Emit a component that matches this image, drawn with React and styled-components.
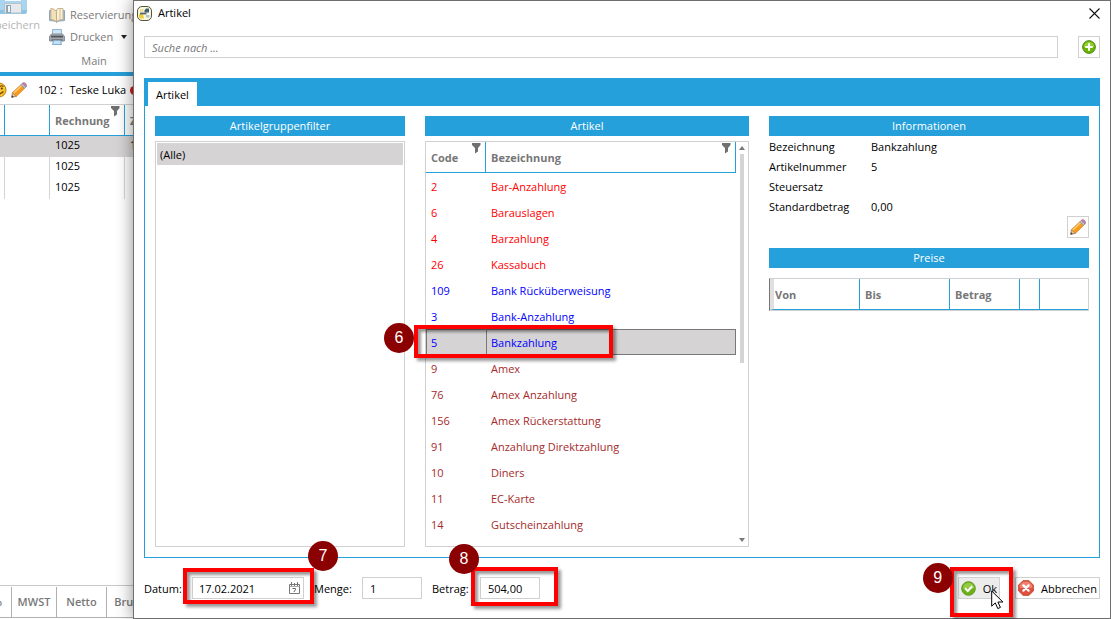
import { useState } from "react";
import styled, { createGlobalStyle } from "styled-components";

const GlobalStyle = createGlobalStyle`
  * {
    box-sizing: border-box;
  }
  body {
    margin: 0;
    background: #fff;
    color: #000;
    font-family: "Open Sans", "Noto Sans", sans-serif;
    font-size: 11px;
    line-height: 16px;
  }
  button, input {
    font: inherit;
    color: inherit;
    margin: 0;
  }
`;

/* main window */
const Page = styled.div`
  position: relative;
  height: 100vh;
  overflow: hidden;
`;
const MainWindow = styled.div`
  display: flex;
  flex-direction: column;
  height: 100%;
  white-space: nowrap;
`;
const Ribbon = styled.div`
  display: flex;
  gap: 9px;
  height: 76px;
  border-bottom: 4px solid #26a0da;
  color: #7a7a7a;
  overflow: hidden;
`;
const SaveButton = styled.button`
  display: flex;
  flex-direction: column;
  align-items: flex-end;
  width: 40px;
  padding: 0;
  border: none;
  background: none;
  color: #b5b5b5;
  svg {
    flex: none;
    margin: 0 12px 2px 0;
  }
`;
const RibbonGroup = styled.div`
  display: flex;
  flex-direction: column;
  padding-top: 4px;
`;
const RibbonButton = styled.button`
  display: flex;
  align-items: center;
  gap: 5px;
  height: 22px;
  padding: 0;
  border: none;
  background: none;
`;
const RibbonTitle = styled.div`
  width: 90px;
  padding-top: 5px;
  text-align: center;
`;
const Caret = styled.span`
  border: 3px solid transparent;
  border-top: 4px solid #222;
  border-bottom: none;
  margin-left: 3px;
`;
const GuestBar = styled.div`
  display: flex;
  align-items: center;
  gap: 4px;
  height: 28px;
  svg {
    flex: none;
  }
`;
const GuestName = styled.span`
  margin-left: 7px;
`;
const RedDot = styled.span`
  width: 9px;
  height: 9px;
  border-radius: 50%;
  background: #d01818;
`;
const BillTable = styled.table`
  width: 100%;
  table-layout: fixed;
  border-spacing: 0;
  border-top: 1px solid #d0d0d0;
`;
const BillHead = styled.th`
  position: relative;
  width: ${(props) => props.$width || "auto"};
  height: 31px;
  padding: 2px 0 0;
  border-right: 1px solid #26a0da;
  border-bottom: 1px solid #26a0da;
  color: #777;
  font-weight: 700;
  text-align: left;
  text-indent: 5px;
`;
const BillCell = styled.td`
  height: 21px;
  padding: 0 0 4px;
  border-right: 1px solid #d5d3d4;
  background: ${(props) => (props.$active ? "#d5d3d4" : "#fff")};
  text-indent: 5px;
`;
const SumBar = styled.div`
  display: flex;
  margin-top: auto;
  padding: 1px 0;
  border-top: 1px solid #c8c8c8;
`;
const SumCell = styled.div`
  display: flex;
  align-items: center;
  justify-content: ${(props) => (props.$cut ? "flex-end" : "center")};
  width: ${(props) => props.$width};
  height: 31px;
  padding-right: ${(props) => (props.$cut ? "9px" : "0")};
  border-right: 1px solid #b0b0b0;
  border-bottom: 1px solid #b0b0b0;
  overflow: hidden;
  color: #777;
  font-weight: 600;
`;

/* dialog */
const Dialog = styled.section`
  position: absolute;
  inset: 0 0 0 133px;
  display: flex;
  flex-direction: column;
  border: 1px solid #6f6f6f;
  background: #fff;
  box-shadow: 0 0 16px rgba(0, 0, 0, 0.45);
`;
const TitleBar = styled.header`
  display: flex;
  align-items: center;
  gap: 6px;
  height: 24px;
  padding: 0 10px 0 3px;
`;
const Title = styled.h1`
  flex: 1;
  margin: 0;
  font-size: 11px;
  font-weight: 400;
`;
const CloseButton = styled.button`
  display: flex;
  padding: 0;
  border: none;
  background: none;
`;
const SearchRow = styled.div`
  display: flex;
  gap: 20px;
  padding: 11px 10px 20px;
`;
const TextInput = styled.input`
  width: ${(props) => props.$width || "auto"};
  height: 22px;
  padding: 1px 7px 0;
  border: 1px solid #d0d0d0;
  background: #fff;
  outline: none;
  &::placeholder {
    color: #777;
    font-style: italic;
    opacity: 1;
  }
`;
const SearchInput = styled(TextInput)`
  flex: 1;
`;
const IconButton = styled.button`
  display: flex;
  align-items: center;
  justify-content: center;
  width: 22px;
  height: 22px;
  padding: 0;
  border: 1px solid #d0d0d0;
  background: #fff;
`;
const TabStrip = styled.div`
  display: flex;
  margin: 0 10px;
  padding: 4px 4px 0;
  background: #26a0da;
`;
const Tab = styled.button`
  height: 24px;
  padding: 2px 8px 0;
  border: none;
  background: #fff;
`;
const TabBody = styled.div`
  flex: 1;
  display: grid;
  grid-template-columns: 250px 1fr 320px;
  gap: 20px;
  min-height: 0;
  margin: 0 10px;
  padding: 10px;
  border: 1px solid #26a0da;
  border-top: none;
`;
const Column = styled.div`
  display: flex;
  flex-direction: column;
  min-width: 0;
`;
const PanelTitle = styled.h2`
  margin: 0;
  padding: 2px 0;
  background: #26a0da;
  color: #fff;
  font-size: 11px;
  font-weight: 400;
  text-align: center;
`;
const GroupList = styled.ul`
  flex: 1;
  margin: 5px 0 0;
  padding: 1px;
  border: 1px solid #d0d0d0;
  list-style: none;
`;
const GroupItem = styled.li`
  padding: 4px 3px 2px;
  background: #d5d3d4;
`;
const TableFrame = styled.div`
  flex: 1;
  display: flex;
  align-items: stretch;
  margin-top: 5px;
  border: 1px solid #d0d0d0;
`;
const TableArea = styled.div`
  flex: 1;
`;
const ArticleTable = styled.table`
  width: 100%;
  table-layout: fixed;
  border-spacing: 0;
`;
const ArticleHead = styled.th`
  position: relative;
  width: ${(props) => props.$width || "auto"};
  height: 31px;
  padding: 2px 5px 0;
  border-right: 1px solid #26a0da;
  border-bottom: 1px solid #26a0da;
  color: #777;
  font-weight: 700;
  text-align: left;
`;
const Funnel = styled.svg`
  position: absolute;
  top: 1px;
  right: 4px;
`;
const ArticleCell = styled.td`
  position: relative;
  height: 26px;
  padding: 2px 4px 0;
  border: 1px solid transparent;
  color: ${(props) => props.color};
`;
const ArticleRow = styled.tr`
  ${(props) =>
    props.$selected &&
    `
    background: #d5d3d4;
    ${ArticleCell} { border-color: #777; }
    ${ArticleCell}:first-child { border-right-color: transparent; }
  `}
`;
const ScrollBar = styled.div`
  display: flex;
  flex-direction: column;
  align-items: center;
  width: 12px;
  padding: 4px 0;
`;
const ScrollArrow = styled.span`
  border: 3px solid transparent;
  ${(props) => (props.$up ? "border-bottom: 4px solid #777; border-top: none;" : "border-top: 4px solid #777; border-bottom: none;")}
`;
const ScrollTrack = styled.div`
  flex: 1;
  width: 4px;
  margin: 4px 0;
`;
const ScrollThumb = styled.div`
  height: 55%;
  background: #d5d3d4;
`;
const InfoList = styled.dl`
  display: grid;
  grid-template-columns: 102px 1fr;
  margin: 1px 0 0;
`;
const InfoCell = styled.div`
  display: contents;
  dt, dd {
    height: 20px;
    margin: 0;
    padding: 2px 0;
  }
`;
const EditRow = styled.div`
  display: flex;
  justify-content: flex-end;
  margin: -1px 0 10px;
`;
const PriceTable = styled.table`
  width: 100%;
  margin-top: 10px;
  table-layout: fixed;
  border-spacing: 0;
  border: 1px solid #d0d0d0;
  border-left-color: #777;
`;
const PriceHead = styled.th`
  width: ${(props) => props.$width || "auto"};
  height: 31px;
  padding: 2px 5px 0;
  border-right: 1px solid #26a0da;
  border-bottom: 1px solid #26a0da;
  color: #777;
  font-weight: 700;
  text-align: left;
  &:first-child {
    border-left: 4px solid #e0e0e0;
    padding-left: 1px;
  }
  &:last-child {
    border-right: none;
  }
`;
const Footer = styled.footer`
  display: flex;
  align-items: center;
  gap: 10px;
  padding: 19px 10px;
`;
const Field = styled.div`
  display: flex;
  align-items: center;
`;
const FieldLabel = styled.label`
  min-width: 48px;
  padding-top: 1px;
`;
const Anchor = styled.div`
  position: relative;
`;
const DateBox = styled.div`
  display: flex;
  align-items: center;
  width: 112px;
  height: 22px;
  border: 1px solid #d0d0d0;
  padding-right: 3px;
`;
const DateInput = styled.input`
  flex: 1;
  min-width: 0;
  padding: 1px 6px 0;
  border: none;
  background: none;
  outline: none;
`;
const PlainButton = styled.button`
  display: flex;
  padding: 0;
  border: none;
  background: none;
`;
const Actions = styled.div`
  display: flex;
  gap: 15px;
  margin-left: auto;
`;
const ActionButton = styled.button`
  display: flex;
  align-items: center;
  gap: 7px;
  height: 22px;
  padding: 0 2px;
  border: 1px solid #d0d0d0;
  background: ${(props) => (props.$hover ? "#ececec" : "#fff")};
  span {
    padding-top: 1px;
  }
`;

/* numbered step marks */
const Mark = styled.div`
  position: absolute;
  z-index: 1;
  top: ${(props) => props.$top};
  left: ${(props) => props.$left};
  width: ${(props) => props.$width};
  height: ${(props) => props.$height};
  border: 4px solid #fe0000;
  box-shadow: 3px 3px 3px rgba(0, 0, 0, 0.4), inset 3px 3px 3px rgba(0, 0, 0, 0.4);
  pointer-events: none;
`;
const Badge = styled.span`
  position: absolute;
  z-index: 2;
  top: ${(props) => props.$top};
  left: ${(props) => props.$left};
  width: 30px;
  height: 30px;
  border-radius: 50%;
  background: #8b0000;
  color: #fff;
  font-family: "Liberation Sans", sans-serif;
  font-size: 16px;
  line-height: 30px;
  text-align: center;
`;
const Pointer = styled.svg`
  position: absolute;
  z-index: 3;
  top: 13px;
  left: 33px;
`;

const PencilIcon = () => (
  <svg width="16" height="16" viewBox="0 0 16 16" aria-hidden="true">
    <path d="M.6 15.4 L1.4 10.6 L5.4 14.4 Z" fill="#e8c9a0" stroke="#8a6a5a" strokeWidth=".7" />
    <path d="M.6 15.4 L1 13.2 L2.9 14.9 Z" fill="#333" />
    <path d="M1.4 10.6 L9.8 2.8 L13.6 6.4 L5.4 14.4 Z" fill="#f79a1e" stroke="#c07a2c" strokeWidth=".6" />
    <path d="M2.8 11 L10.8 3.6" stroke="#ffd07a" strokeWidth="1.4" />
    <path d="M9.8 2.8 L11.4 1.3 L15.1 4.9 L13.6 6.4 Z" fill="#b9bfd0" stroke="#7d8296" strokeWidth=".6" />
    <path d="M11.4 1.3 Q12.8 -.2 14.6 1.4 Q16.4 3.2 15.1 4.9 Z" fill="#d486ac" stroke="#92607e" strokeWidth=".6" />
  </svg>
);

const FunnelIcon = () => (
  <Funnel width="9" height="11" viewBox="0 0 9 11" aria-hidden="true">
    <path d="M0 0H8.5V2L6 5V8.5L3 10.5V5L0 2Z" fill="#707070" />
  </Funnel>
);

const SaveIcon = () => (
  <svg width="29" height="15" viewBox="0 0 29 15" aria-hidden="true">
    <path d="M0 0H28V11Q28 14 25 14H0Z" fill="#a9d5ef" />
    <path d="M0 10H28V11Q28 14 25 14H0Z" fill="#8cc4e6" />
    <path d="M5.5 3.5H22.5V13H5.5Z" fill="#e6e9ec" stroke="#b3c3cf" />
    <path d="M7 5H12V13H7Z" fill="#91a6b4" />
    <path d="M9 6H11V12H9Z" fill="#f4f7f9" />
    <path d="M6 0H22V1H6Z" fill="#f5f9fc" />
  </svg>
);

const BookIcon = () => (
  <svg width="16" height="16" viewBox="0 0 16 16" aria-hidden="true">
    <path d="M0.5 3.5V13.5L6.5 14.2L7.5 15.5L9 14.2L15.5 13.5V3.5Z" fill="#a9c4dc" stroke="#8da6bd" />
    <path d="M1.8 1.5Q5 1.4 7.5 4.4V14.8Q5 12.6 1.8 12.4Z" fill="#f3dfb8" stroke="#c0a377" strokeWidth=".8" />
    <path d="M14 1.5H8.6Q7.7 2.4 7.5 4.4V14.8Q9 12.6 14 12.4Z" fill="#f9f0db" stroke="#c0a377" strokeWidth=".8" />
    <path d="M11 2V12.4" stroke="#e0cda4" strokeWidth="1.4" />
  </svg>
);

const PrinterIcon = () => (
  <svg width="16" height="16" viewBox="0 0 16 16" aria-hidden="true">
    <path d="M3.5 0.5H12.5V6H3.5Z" fill="#cfe6f8" stroke="#93b5d0" />
    <path d="M2.5 5H13.5L15.5 7.5V12H.5V7.5Z" fill="#a5a9ae" stroke="#8a8f95" />
    <path d="M2 7.6H14" stroke="#50565d" strokeWidth="1.8" />
    <path d="M2.5 11H13.5" stroke="#62686f" strokeWidth="1.4" />
    <path d="M4.5 11.5H11.5L12.5 15.5H3.5Z" fill="#bfe0f7" stroke="#84add0" />
  </svg>
);

const SmileyIcon = () => (
  <svg width="7" height="16" viewBox="9 0 7 16" aria-hidden="true">
    <circle cx="8" cy="8" r="7" fill="#fbc62d" stroke="#b37a10" />
    <path d="M4 10Q8 14 12.5 9.5" fill="none" stroke="#6d4300" strokeWidth="1.4" />
    <path d="M9 4.5Q10.5 3 12.5 4.5" fill="none" stroke="#6d4300" strokeWidth="1.2" />
    <circle cx="10.8" cy="6.5" r="1" fill="#50300a" />
  </svg>
);

const AppIcon = () => (
  <svg width="15" height="15" viewBox="0 0 15 15" aria-hidden="true">
    <rect x="0.5" y="0.5" width="14" height="14" rx="4.5" fill="#faf6dc" stroke="#55523f" />
    <path d="M2 8H6L7 12.5H4Q2.4 12.5 2 11Z" fill="#f0cf35" />
    <path d="M3 3H6.5V6H3Z" fill="#eee0a0" />
    <path d="M7.5 4.5L9 2.5H12V6.5H7.5Z" fill="#3d5f74" />
    <path d="M3 6.6H9.5V8.4H3Z" fill="#50687a" />
    <path d="M9 9H12.5V11.5H9Z" fill="#a9c8d4" />
  </svg>
);

const CloseIcon = () => (
  <svg width="11" height="11" viewBox="0 0 11 11" aria-hidden="true">
    <path d="M0.5 0.5L10.5 10.5M10.5 0.5L0.5 10.5" stroke="#111" strokeWidth="1.1" />
  </svg>
);

const AddIcon = () => (
  <svg width="14" height="14" viewBox="0 0 15 15" aria-hidden="true">
    <circle cx="7.5" cy="7.5" r="6.8" fill="#6cb500" stroke="#3f7d0c" />
    <path d="M1.8 7.5A5.7 5.7 0 0 1 13.2 7.5Z" fill="#93cf2c" />
    <path d="M7.5 3.5V11.5M3.5 7.5H11.5" stroke="#fff" strokeWidth="2.2" />
  </svg>
);

const OkIcon = () => (
  <svg width="15" height="15" viewBox="0 0 15 15" aria-hidden="true">
    <circle cx="7.5" cy="7.5" r="6.8" fill="#6fb01a" stroke="#5c9a1c" />
    <path d="M1.8 7.5A5.7 5.7 0 0 1 13.2 7.5Z" fill="#94cb45" />
    <path d="M4 7.3L6.8 10L11.2 5.3" fill="none" stroke="#fff" strokeWidth="2" />
  </svg>
);

const CancelIcon = () => (
  <svg width="16" height="16" viewBox="0 0 16 16" aria-hidden="true">
    <path d="M5 .7H11L15.3 5V11L11 15.3H5L.7 11V5Z" fill="#e05040" stroke="#c8452f" />
    <path d="M5.3 1.7H10.7L14.3 5.3V8H1.7V5.3Z" fill="#ee8272" />
    <path d="M5.4 5.4L10.6 10.6M10.6 5.4L5.4 10.6" stroke="#fff" strokeWidth="2.2" strokeLinecap="round" />
  </svg>
);

const CalendarIcon = () => (
  <svg width="11" height="12" viewBox="0 0 11 12" aria-hidden="true">
    <path d="M0.5 2.5H10.5V11.5H0.5Z" fill="#fff" stroke="#777" />
    <path d="M0.5 4.5H10.5" stroke="#aaa" />
    <path d="M2.5 0V4M5.5 1V4M8.5 0V4" stroke="#777" />
    <path d="M3.5 6.5H6.5V7.5L5 10" fill="none" stroke="#666" />
  </svg>
);

const articles = [
  { code: "2", name: "Bar-Anzahlung", color: "#ff0000" },
  { code: "6", name: "Barauslagen", color: "#ff0000" },
  { code: "4", name: "Barzahlung", color: "#ff0000" },
  { code: "26", name: "Kassabuch", color: "#ff0000" },
  { code: "109", name: "Bank Rücküberweisung", color: "#0000ff" },
  { code: "3", name: "Bank-Anzahlung", color: "#0000ff" },
  { code: "5", name: "Bankzahlung", color: "#0000ff", step: "6" },
  { code: "9", name: "Amex", color: "#a52a2a" },
  { code: "76", name: "Amex Anzahlung", color: "#a52a2a" },
  { code: "156", name: "Amex Rückerstattung", color: "#a52a2a" },
  { code: "91", name: "Anzahlung Direktzahlung", color: "#a52a2a" },
  { code: "10", name: "Diners", color: "#a52a2a" },
  { code: "11", name: "EC-Karte", color: "#a52a2a" },
  { code: "14", name: "Gutscheinzahlung", color: "#a52a2a" },
];

const infos = [
  ["Bezeichnung", "Bankzahlung"],
  ["Artikelnummer", "5"],
  ["Steuersatz", ""],
  ["Standardbetrag", "0,00"],
];

const bills = [
  { number: "1025", rest: "1", active: true },
  { number: "1025", rest: "" },
  { number: "1025", rest: "" },
];

const Background = () => (
  <MainWindow>
    <Ribbon>
      <SaveButton>
        <SaveIcon />
        Speichern
      </SaveButton>
      <RibbonGroup>
        <RibbonButton>
          <BookIcon />
          Reservierung
        </RibbonButton>
        <RibbonButton>
          <PrinterIcon />
          Drucken
          <Caret />
        </RibbonButton>
        <RibbonTitle>Main</RibbonTitle>
      </RibbonGroup>
    </Ribbon>
    <GuestBar>
      <SmileyIcon />
      <PencilIcon />
      <GuestName>102 :</GuestName>
      <span>&nbsp;Teske Luka</span>
      <RedDot />
    </GuestBar>
    <BillTable>
      <thead>
        <tr>
          <BillHead $width="5px" />
          <BillHead $width="45px" />
          <BillHead $width="75px">
            Rechnung
            <FunnelIcon />
          </BillHead>
          <BillHead>Zimmer</BillHead>
        </tr>
      </thead>
      <tbody>
        {bills.map((bill, index) => (
          <tr key={index}>
            <BillCell $active={bill.active} />
            <BillCell $active={bill.active} />
            <BillCell $active={bill.active}>{bill.number}</BillCell>
            <BillCell $active={bill.active}>{bill.rest}</BillCell>
          </tr>
        ))}
      </tbody>
    </BillTable>
    <SumBar>
      <SumCell $width="12px" $cut>%</SumCell>
      <SumCell $width="45px">MWST</SumCell>
      <SumCell $width="50px">Netto</SumCell>
      <SumCell $width="50px">Brutto</SumCell>
    </SumBar>
  </MainWindow>
);

const App = () => {
  const [search, setSearch] = useState("");
  const [selected, setSelected] = useState("5");

  return (
    <Page>
      <GlobalStyle />
      <Background />
      <Dialog role="dialog" aria-labelledby="dialog-title">
        <TitleBar>
          <AppIcon />
          <Title id="dialog-title">Artikel</Title>
          <CloseButton aria-label="Schließen">
            <CloseIcon />
          </CloseButton>
        </TitleBar>
        <SearchRow>
          <SearchInput
            aria-label="Suche"
            placeholder="Suche nach ..."
            value={search}
            onChange={(e) => setSearch(e.target.value)}
          />
          <IconButton aria-label="Hinzufügen">
            <AddIcon />
          </IconButton>
        </SearchRow>
        <TabStrip role="tablist">
          <Tab role="tab" aria-selected="true">Artikel</Tab>
        </TabStrip>
        <TabBody>
          <Column>
            <PanelTitle>Artikelgruppenfilter</PanelTitle>
            <GroupList role="listbox" aria-label="Artikelgruppenfilter">
              <GroupItem role="option" aria-selected="true">(Alle)</GroupItem>
            </GroupList>
          </Column>
          <Column>
            <PanelTitle>Artikel</PanelTitle>
            <TableFrame>
              <TableArea>
                <ArticleTable>
                  <thead>
                    <tr>
                      <ArticleHead $width="60px">
                        Code
                        <FunnelIcon />
                      </ArticleHead>
                      <ArticleHead>
                        Bezeichnung
                        <FunnelIcon />
                      </ArticleHead>
                    </tr>
                  </thead>
                  <tbody>
                    {articles.map((article) => (
                      <ArticleRow
                        key={article.code}
                        $selected={article.code === selected}
                        onClick={() => setSelected(article.code)}
                      >
                        <ArticleCell color={article.color}>
                          {article.code}
                          {article.step && (
                            <>
                              <Mark $top="-5px" $left="-13px" $width="199px" $height="33px" />
                              <Badge $top="-7px" $left="-43px">{article.step}</Badge>
                            </>
                          )}
                        </ArticleCell>
                        <ArticleCell color={article.color}>{article.name}</ArticleCell>
                      </ArticleRow>
                    ))}
                  </tbody>
                </ArticleTable>
              </TableArea>
              <ScrollBar aria-hidden="true">
                <ScrollArrow $up />
                <ScrollTrack>
                  <ScrollThumb />
                </ScrollTrack>
                <ScrollArrow />
              </ScrollBar>
            </TableFrame>
          </Column>
          <Column>
            <PanelTitle>Informationen</PanelTitle>
            <InfoList>
              {infos.map(([label, value]) => (
                <InfoCell key={label}>
                  <dt>{label}</dt>
                  <dd>{value}</dd>
                </InfoCell>
              ))}
            </InfoList>
            <EditRow>
              <IconButton aria-label="Bearbeiten">
                <PencilIcon />
              </IconButton>
            </EditRow>
            <PanelTitle>Preise</PanelTitle>
            <PriceTable>
              <thead>
                <tr>
                  <PriceHead $width="90px">Von</PriceHead>
                  <PriceHead $width="90px">Bis</PriceHead>
                  <PriceHead $width="70px">Betrag</PriceHead>
                  <PriceHead $width="20px" />
                  <PriceHead />
                </tr>
              </thead>
            </PriceTable>
          </Column>
        </TabBody>
        <Footer>
          <Field>
            <FieldLabel htmlFor="datum">Datum:</FieldLabel>
            <Anchor>
              <DateBox>
                <DateInput id="datum" defaultValue="17.02.2021" />
                <PlainButton aria-label="Kalender">
                  <CalendarIcon />
                </PlainButton>
              </DateBox>
              <Mark $top="-9px" $left="-9px" $width="131px" $height="36px" />
              <Badge $top="-36px" $left="116px">7</Badge>
            </Anchor>
          </Field>
          <Field>
            <FieldLabel htmlFor="menge">Menge:</FieldLabel>
            <TextInput id="menge" $width="60px" defaultValue="1" />
          </Field>
          <Field>
            <FieldLabel htmlFor="betrag">Betrag:</FieldLabel>
            <Anchor>
              <TextInput id="betrag" $width="60px" defaultValue="504,00" />
              <Mark $top="-10px" $left="-9px" $width="87px" $height="39px" />
              <Badge $top="-33px" $left="-31px">8</Badge>
            </Anchor>
          </Field>
          <Actions>
            <Anchor>
              <ActionButton $hover>
                <OkIcon />
                <span>Ok</span>
              </ActionButton>
              <Mark $top="-10px" $left="-8px" $width="63px" $height="50px" />
              <Badge $top="-14px" $left="-35px">9</Badge>
              <Pointer width="13" height="20" viewBox="0 0 13 20" aria-hidden="true">
                <path
                  d="M0.7 1V16.2L4.3 12.9L6.8 18.6L9.4 17.4L6.9 12H11.9Z"
                  fill="#fff"
                  stroke="#000"
                />
              </Pointer>
            </Anchor>
            <ActionButton>
              <CancelIcon />
              <span>Abbrechen</span>
            </ActionButton>
          </Actions>
        </Footer>
      </Dialog>
    </Page>
  );
};

export default App;
